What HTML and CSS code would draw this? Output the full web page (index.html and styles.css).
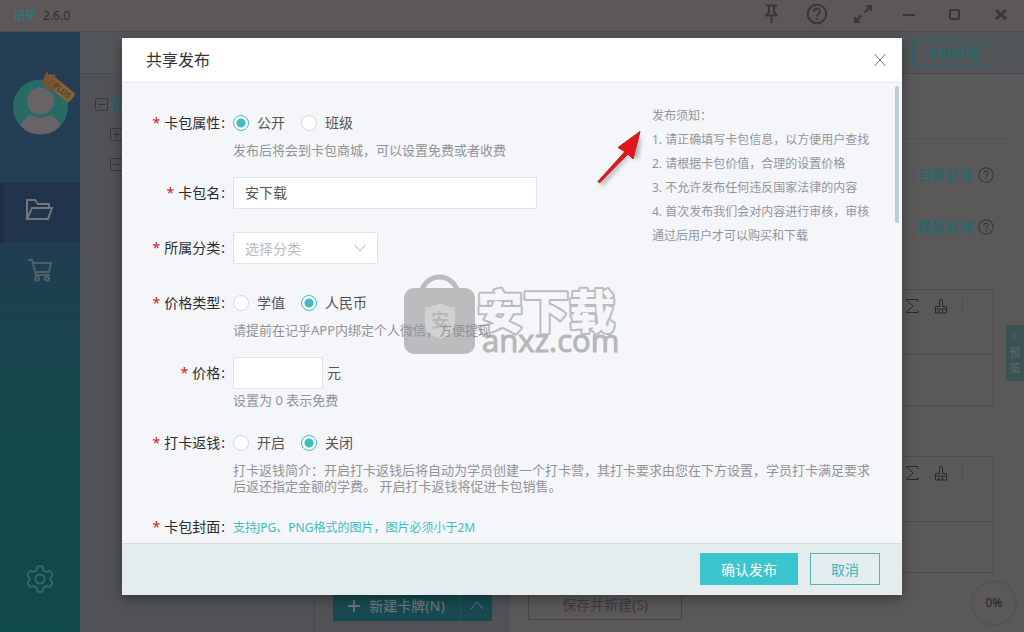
FILE: index.html
```html
<!DOCTYPE html>
<html lang="zh-CN">
<head>
<meta charset="utf-8">
<title>共享发布</title>
<link rel="stylesheet" href="styles.css">
</head>
<body>
<div class="app">
  <header class="titlebar">
    <span class="logo">记乎</span><span class="version">2.6.0</span>
    <div class="window-buttons">
      <button type="button"><svg width="16" height="20" viewBox="0 0 16 20"><path d="M3 1.500h11M6 2v6M11 2v6M2.500 11.500h12M3.500 11L6 8M13.500 11L11 8M8.500 12v7"/></svg></button>
      <button type="button"><svg width="22" height="22" viewBox="0 0 22 22"><circle cx="11" cy="11" r="9.300"/><path d="M8 8.700c0-4 6-4 6-.3 0 2.300-3 2.400-3 5M11 15v1.800"/></svg></button>
      <button type="button"><svg width="20" height="20" viewBox="0 0 20 20"><path d="M11.500 8.500l4-4M8.500 11.500l-4 4"/><path class="solid" d="M12 1h7v7zM1 12v7h7z"/></svg></button>
      <button type="button"><svg width="14" height="20" viewBox="0 0 14 20"><path d="M1 11h12"/></svg></button>
      <button type="button"><svg width="14" height="20" viewBox="0 0 14 20"><rect x="2" y="6" width="9" height="9" rx="1"/></svg></button>
      <button type="button"><svg width="14" height="20" viewBox="0 0 14 20"><path class="thick" d="M2 6l10 9M12 6L2 15"/></svg></button>
    </div>
  </header>
  <div class="workspace">
    <nav class="sidebar">
      <div class="profile">
        <svg width="64" height="68" viewBox="0 0 64 68">
          <clipPath id="round"><circle cx="28.500" cy="38" r="27.500"/></clipPath>
          <circle cx="28.500" cy="38" r="27.500" fill="#286b65"/>
          <g clip-path="url(#round)" fill="#676367"><circle cx="28.500" cy="32" r="13.500"/><path d="M7 60c4-9 8-13 12-14 6 4 13 4 19 0 5 2 9 6 12 14v8H7z"/></g>
          <g transform="translate(47 19) rotate(39)">
            <rect x="-16" y="-6" width="33" height="12" rx="3" fill="#80613a"/>
            <path d="M-17 7l-3-13 6 4 2-7 5 7 6-3-2 12z" fill="#7b5230"/>
            <text class="plus" x="-6" y="3">PLUS</text>
          </g>
        </svg>
      </div>
      <button type="button" class="nav-item active"><svg width="30" height="24" viewBox="0 0 30 24"><path d="M2 21V2h8l3 4h11v4M2 21L7 10h20l-4 11z"/></svg></button>
      <button type="button" class="nav-item"><svg width="28" height="24" viewBox="0 0 28 24"><path d="M2 2h4l4 15h14M7 5h18l-2 9H9"/><circle cx="11" cy="20.500" r="2"/><circle cx="21" cy="20.500" r="2"/></svg></button>
      <button type="button" class="nav-item settings"><svg width="28" height="30" viewBox="0 0 28 30"><path d="M11 5q0-3 3-3t3 3l1 2 3 1 2-1q2 0 3.500 4 0 1-2 3v2q2 2 2 3-1.500 4-3.500 4l-2-1-3 1-1 2q0 3-3 3t-3-3l-1-2-3-1-2 1q-2 0-3.500-4 0-1 2-3v-2q-2-2-2-3Q3 7 5 7l2 1 3-1z"/><circle cx="14" cy="15" r="4.500"/></svg></button>
    </nav>
    <div class="content">
      <div class="toolbar"><span class="tool-edge"></span><button type="button">卡包设置</button></div>
      <div class="columns">
        <ul class="tree">
          <li><svg width="13" height="13" viewBox="0 0 13 13"><rect x=".5" y=".5" width="12" height="12" rx="1"/><path d="M3 6.500h7"/></svg><span>所</span></li>
          <li class="child"><svg width="13" height="13" viewBox="0 0 13 13"><rect x=".5" y=".5" width="12" height="12" rx="1"/><path d="M3 6.500h7M6.500 3v7"/></svg></li>
          <li class="child"><svg width="13" height="13" viewBox="0 0 13 13"><rect x=".5" y=".5" width="12" height="12" rx="1"/><path d="M3 6.500h7"/></svg></li>
        </ul>
        <div class="cards">
          <div class="split-button">
            <button type="button" class="new-card"><svg width="12" height="12" viewBox="0 0 12 12"><path d="M6 0v12M0 6h12"/></svg>新建卡牌(N)</button>
            <button type="button" class="more"><svg width="14" height="10" viewBox="0 0 14 10"><path d="M1 9l6-7 6 7"/></svg></button>
          </div>
        </div>
        <section class="editor">
          <hr class="dashes">
          <div class="manage"><a href="#">目录管理</a><svg width="16" height="16" viewBox="0 0 22 22"><circle cx="11" cy="11" r="9.800"/><path d="M8 8.700c0-4 6-4 6-.3 0 2.300-3 2.400-3 5M11 15v1.800"/></svg></div>
          <div class="manage second"><a href="#">模板管理</a><svg width="16" height="16" viewBox="0 0 22 22"><circle cx="11" cy="11" r="9.800"/><path d="M8 8.700c0-4 6-4 6-.3 0 2.300-3 2.400-3 5M11 15v1.800"/></svg></div>
          <div class="field">
            <div class="field-tools">
              <svg width="14" height="16" viewBox="0 0 14 16"><path d="M13 4V1.500H1L8 8l-7 6.500h12V12"/></svg>
              <svg width="14" height="16" viewBox="0 0 14 16"><path d="M1.500 15V8.500h4V2q1.500-2 3 0v6.500h4V15zM1.500 11h11M5 12v3M8.500 12v3"/></svg>
              <span class="bar"></span>
            </div>
          </div>
          <div class="field">
            <div class="field-tools">
              <svg width="14" height="16" viewBox="0 0 14 16"><path d="M13 4V1.500H1L8 8l-7 6.500h12V12"/></svg>
              <svg width="14" height="16" viewBox="0 0 14 16"><path d="M1.500 15V8.500h4V2q1.500-2 3 0v6.500h4V15zM1.500 11h11M5 12v3M8.500 12v3"/></svg>
              <span class="bar"></span>
            </div>
          </div>
          <button type="button" class="save">保存并新建(S)</button>
        </section>
      </div>
    </div>
  </div>
  <button type="button" class="preview"><svg width="8" height="10" viewBox="0 0 8 10"><path d="M6 1L2 5l4 4"/></svg>预览</button>
  <div class="progress">0%</div>

  <div class="modal" role="dialog" aria-labelledby="dialog-title">
    <header class="modal-head">
      <h1 id="dialog-title">共享发布</h1>
      <button type="button" class="close"><svg width="12" height="14" viewBox="0 0 12 14"><path d="M.5 1l11 12M11.500 1L.5 13"/></svg></button>
    </header>
    <div class="modal-body">
      <form class="form" id="publish">
        <div class="row noted">
          <span class="label">卡包属性</span>
          <div class="control">
            <div class="radios"><label><input type="radio" name="scope" checked>公开</label><label><input type="radio" name="scope">班级</label></div>
            <p class="hint">发布后将会到卡包商城，可以设置免费或者收费</p>
          </div>
        </div>
        <div class="row">
          <label class="label" for="name">卡包名</label>
          <div class="control"><input class="text name" id="name" type="text" value="安下载"></div>
        </div>
        <div class="row">
          <label class="label" for="category">所属分类</label>
          <div class="control">
            <div class="select-wrap"><select id="category"><option>选择分类</option></select><svg width="12" height="8" viewBox="0 0 12 8"><path d="M1 1l5 6 5-6"/></svg></div>
          </div>
        </div>
        <div class="row noted">
          <span class="label">价格类型</span>
          <div class="control">
            <div class="radios"><label><input type="radio" name="currency">学值</label><label><input type="radio" name="currency" checked>人民币</label></div>
            <p class="hint">请提前在记乎APP内绑定个人微信，方便提现</p>
          </div>
        </div>
        <div class="row noted">
          <label class="label" for="price">价格</label>
          <div class="control">
            <div class="price-line"><input class="text price" id="price" type="text"><span>元</span></div>
            <p class="hint">设置为 0 表示免费</p>
          </div>
        </div>
        <div class="row noted">
          <span class="label">打卡返钱</span>
          <div class="control">
            <div class="radios"><label><input type="radio" name="cashback">开启</label><label><input type="radio" name="cashback" checked>关闭</label></div>
            <p class="hint">打卡返钱简介：开启打卡返钱后将自动为学员创建一个打卡营，其打卡要求由您在下方设置，学员打卡满足要求后返还指定金额的学费。 开启打卡返钱将促进卡包销售。</p>
          </div>
        </div>
        <div class="row cover">
          <span class="label">卡包封面</span>
          <div class="control">支持JPG、PNG格式的图片，图片必须小于2M</div>
        </div>
      </form>
      <aside class="notice">
        <p>发布须知：</p>
        <p>1. 请正确填写卡包信息，以方便用户查找</p>
        <p>2. 请根据卡包价值，合理的设置价格</p>
        <p>3. 不允许发布任何违反国家法律的内容</p>
        <p>4. 首次发布我们会对内容进行审核，审核通过后用户才可以购买和下载</p>
      </aside>
      <span class="scroll-thumb"></span>
      <svg class="arrow" width="56" height="66" viewBox="0 0 56 66">
        <path class="arrow-shade" d="M8 60l27-31 8 5 3-24-20 15 6 3L5 57z"/>
        <path class="arrow-body" d="M4.500 57L33 28l5 5 7-27.500L23 21.500l7 4L3 55.500z"/>
      </svg>
      <svg class="watermark" width="230" height="90" viewBox="0 0 230 90">
        <path class="handle" d="M19 19C25-1 50-1 56 19"/>
        <rect class="bag" x="2" y="15" width="71" height="66" rx="10"/>
        <path class="shield" d="M38 30q6 4 15 4v18q0 9-15 14-15-5-15-14V34q9 0 15-4z"/>
        <text class="seal" x="29" y="54">安</text>
        <text class="brand" x="75" y="55">安下载</text>
        <text class="domain" x="80" y="79">anxz.com</text>
      </svg>
    </div>
    <footer class="modal-foot">
      <button type="submit" form="publish" class="confirm">确认发布</button>
      <button type="button" class="cancel">取消</button>
    </footer>
  </div>
</div>
</body>
</html>
```
FILE: styles.css
```css
* { box-sizing: border-box; }
body {
  margin: 0;
  font-family: "Noto Sans", "Noto Sans CJK SC", sans-serif;
  font-size: 14px;
  line-height: 20px;
  color: #555;
}
button, input, select { font: inherit; color: inherit; margin: 0; }
button { padding: 0; border: 0; background: none; }
p, h1, ul { margin: 0; padding: 0; }
svg { display: block; flex: none; fill: none; stroke: currentColor; }

.app {
  position: relative;
  display: flex;
  flex-direction: column;
  min-height: 100vh;
  background: #5b585a;
}

.titlebar {
  display: flex;
  align-items: center;
  height: 32px;
  padding-left: 13px;
  border-bottom: 1px solid #4c4a4d;
  background: #5c585a;
}
.logo { font-size: 12px; font-weight: 700; color: #2a787b; }
.version { margin-left: 6px; padding-top: 1px; font-size: 12px; color: #302e30; }
.window-buttons { display: flex; margin-left: auto; color: #383638; }
.window-buttons button {
  display: flex;
  align-items: center;
  justify-content: center;
  width: 46px;
  height: 28px;
  padding-bottom: 3px;
}
.window-buttons svg { stroke-width: 2; }
.window-buttons .solid { fill: currentColor; stroke: none; }
.window-buttons .thick { stroke-width: 3; }

.workspace { display: flex; flex: 1; }
.sidebar {
  display: flex;
  flex-direction: column;
  width: 80px;
  background: linear-gradient(#243d55 0%, #233d53 25%, #1d404f 42%, #14484c 62%, #10494a 100%);
}
.profile { height: 151px; padding: 37px 0 0 12px; }
.profile svg { stroke: none; }
.plus { font: 700 8px "Open Sans", sans-serif; fill: #593d29; }
.nav-item {
  display: flex;
  align-items: center;
  justify-content: center;
  height: 60px;
  padding-bottom: 6px;
  color: #536068;
}
.nav-item svg { stroke-width: 2; }
.nav-item.active { border-left: 4px solid #1d2d42; padding-right: 4px; background: #20344e; color: #737579; }
.nav-item.settings { margin-top: auto; margin-bottom: 20px; color: #346768; }

.content { display: flex; flex: 1; flex-direction: column; min-width: 0; }
.toolbar {
  display: flex;
  align-items: center;
  justify-content: flex-end;
  gap: 8px;
  height: 42px;
  padding-right: 30px;
  border-bottom: 1px solid #474b4d;
  background: #535658;
}
.toolbar button, .tool-edge {
  width: 82px;
  height: 24px;
  border: 1px solid #236468;
  line-height: 22px;
  color: #1b6a70;
}
.columns { display: flex; flex: 1; }
.tree {
  width: 235px;
  padding: 20px 0 0 15px;
  border-right: 1px solid #47494d;
  background: #505256;
  list-style: none;
}
.tree li { display: flex; align-items: center; gap: 3px; height: 21px; margin-bottom: 9px; color: #353739; }
.tree .child { padding-left: 15px; }
.tree span { color: #1b6a70; }
.cards { display: flex; align-items: flex-end; width: 195px; padding: 0 18px 11px; background: #505256; }
.split-button { display: flex; flex: 1; height: 32px; background: #174a50; color: #66757a; }
.new-card { display: flex; flex: 1; align-items: center; justify-content: center; gap: 9px; padding-top: 2px; font-weight: 500; }
.new-card svg { stroke-width: 2; }
.more { display: flex; align-items: center; justify-content: center; width: 32px; border-left: 1px solid #285459; }

.editor { display: flex; flex: 1; flex-direction: column; padding: 0 30px 12px 18px; }
.dashes { width: 100%; margin: 64px 0 0 16px; border: 0; border-top: 1px dashed #504d50; }
.manage { display: flex; align-items: center; justify-content: flex-end; gap: 5px; height: 24px; margin-top: 24px; color: #383638; }
.manage.second { margin-top: 28px; }
.manage svg { stroke-width: 1.5; }
.manage a { color: #1b6a70; text-decoration: none; }
.field { height: 117px; margin-top: 50px; border: 1px solid #4e4c4f; }
.field-tools {
  display: flex;
  justify-content: flex-end;
  gap: 15px;
  height: 65px;
  padding: 8px 30px 0 0;
  border-bottom: 1px solid #4e4c4f;
  color: #2b292c;
}
.field-tools .bar { width: 1px; height: 16px; margin-left: -1px; background: #504e51; }
.save { width: 154px; height: 32px; margin-top: auto; padding-top: 2px; border: 1px solid #464447; color: #3e3b3e; }

.preview {
  position: absolute;
  top: 325px;
  right: 0;
  display: flex;
  flex-direction: column;
  align-items: center;
  gap: 4px;
  width: 18px;
  padding: 6px 3px;
  border-radius: 3px 0 0 3px;
  background: #3b5254;
  color: #5f6c6e;
  font-size: 11px;
  line-height: 15px;
}
.progress {
  position: absolute;
  right: 7px;
  bottom: 6px;
  width: 46px;
  height: 46px;
  border: 2px solid #565355;
  border-radius: 50%;
  font-size: 12px;
  line-height: 42px;
  text-align: center;
  color: #242124;
}

.modal {
  position: absolute;
  top: 38px;
  left: 50%;
  display: flex;
  flex-direction: column;
  width: 780px;
  max-width: 100%;
  transform: translateX(-50%);
  background: #f4f6fa;
  box-shadow: 0 4px 12px rgba(0, 0, 0, .35);
}
.modal-head {
  display: flex;
  align-items: center;
  justify-content: space-between;
  height: 45px;
  padding: 0 16px 0 24px;
  border-bottom: 1px solid #e4e7ec;
  background: #fff;
}
.modal-head h1 { font-size: 16px; font-weight: 400; color: #333; }
.close { color: #777; }
.modal-body {
  position: relative;
  display: grid;
  grid-template-columns: minmax(0, 1fr) 220px;
  padding: 24px 30px 2px 0;
}
.form { grid-area: 1 / 1 / 2 / 3; z-index: 1; }
.row { display: flex; gap: 8px; margin-bottom: 23px; line-height: 32px; }
.row.noted { margin-bottom: 18px; }
.row.cover { margin-bottom: 0; line-height: 28px; }
.row.cover .control { font-size: 12px; line-height: 30px; height: 28px; color: #3dbdc3; }
.label { flex: none; width: 103px; text-align: right; color: #2c2c2e; }
.label::before { content: "*"; margin-right: 4px; color: #d0202c; }
.label::after { content: ":"; margin-left: 1px; }
.control { flex: 1; min-width: 0; }
.radios { display: flex; gap: 16px; height: 32px; }
.radios label { display: flex; align-items: center; gap: 8px; }
.radios input {
  appearance: none;
  width: 16px;
  height: 16px;
  border: 1px solid #d6d9dd;
  border-radius: 50%;
  background: #fff;
}
.radios input:checked { border-color: #3dbdc3; background: radial-gradient(circle, #3dbdc3 4px, #fff 5px); }
.hint { margin: 3px 0 1px; font-size: 13px; line-height: 16px; color: #929396; }
.text, select {
  display: block;
  height: 32px;
  padding: 0 11px;
  border: 1px solid #e1e4e8;
  border-radius: 0;
  outline: 0;
  background: #fff;
}
.name { width: 304px; }
.price { width: 90px; }
.price-line { display: flex; gap: 4px; height: 32px; }
.select-wrap { position: relative; width: 145px; }
select { appearance: none; width: 100%; color: #b9bbbe; }
.select-wrap svg { position: absolute; top: 12px; right: 12px; color: #b4b6b9; pointer-events: none; }
.notice { grid-area: 1 / 2 / 2 / 3; margin-top: -3px; font-size: 12px; line-height: 24px; color: #949598; }
.scroll-thumb { position: absolute; top: 3px; right: 3px; width: 4px; height: 137px; border-radius: 2px; background: #bdcdd4; }
.arrow { position: absolute; top: 43px; left: 473px; z-index: 2; pointer-events: none; }
.arrow-shade { fill: #555; stroke: none; opacity: .45; filter: blur(2px); }
.arrow-body { fill: #e3171b; stroke: #b52225; }
.watermark { position: absolute; top: 190px; left: 280px; z-index: 0; stroke: none; }
.handle { stroke: #bbbcbe; stroke-width: 5; }
.bag { fill: #bbbcbe; }
.shield { fill: #d0d1d3; }
.seal { font: 700 18px "Noto Sans CJK SC", sans-serif; fill: #b6b7b9; }
.brand { font: 900 46px "Noto Sans CJK SC", sans-serif; fill: #f4f6fa; stroke: #bbbcbe; stroke-width: 4; stroke-linejoin: round; paint-order: stroke; }
.domain { font: 400 31px "Open Sans", sans-serif; fill: #b6b7b9; stroke: #b6b7b9; }
.modal-foot {
  display: flex;
  justify-content: flex-end;
  gap: 12px;
  padding: 9px 22px 10px;
  border-top: 1px solid #d5dfe0;
  background: #e4ecee;
}
.modal-foot button { height: 32px; padding-top: 1px; }
.confirm { width: 98px; background: #3bc5cf; color: #fff; }
.cancel { width: 70px; border: 1px solid #4cb8c3; color: #3eb4c0; }
```
